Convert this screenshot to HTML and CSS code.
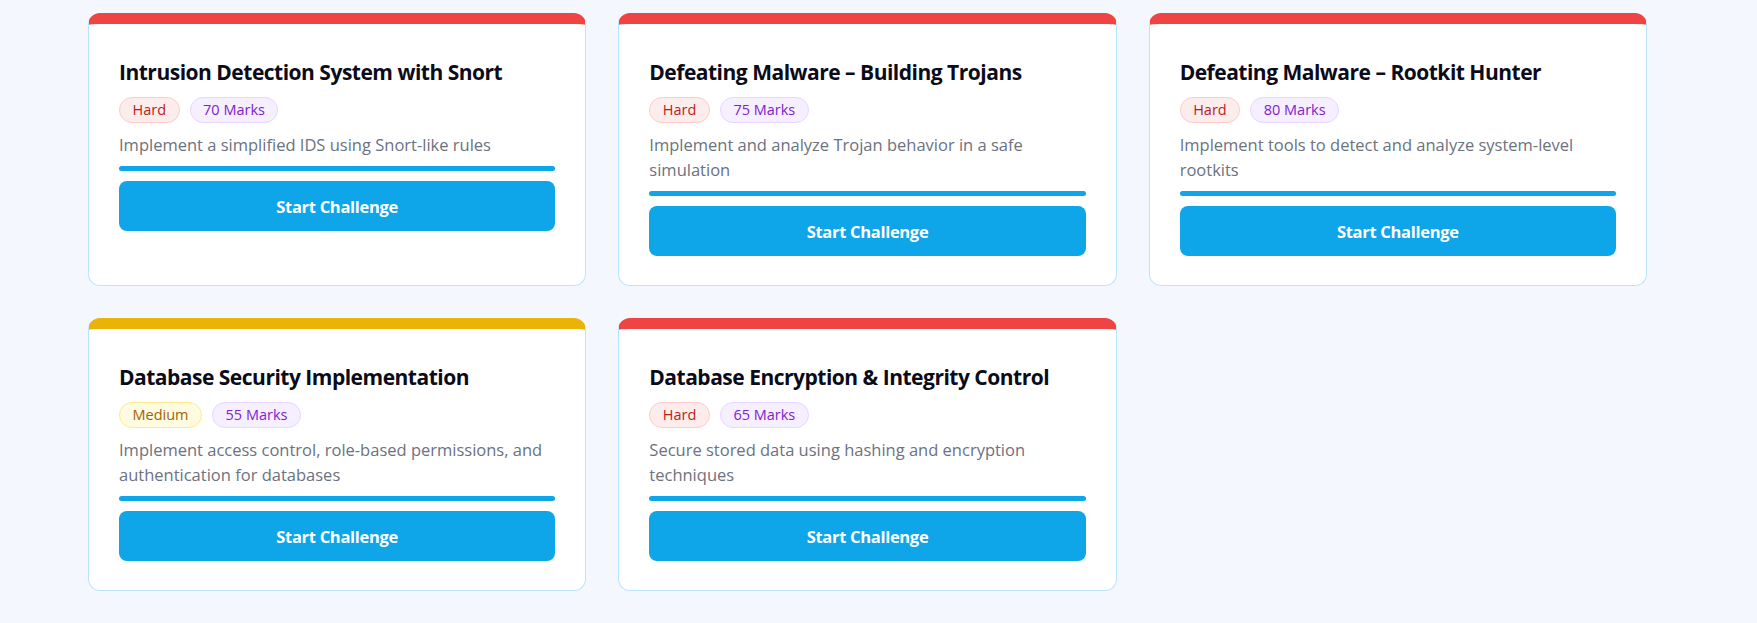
FILE: index.html
```html
<!DOCTYPE html>
<html lang="en">
<head>
<meta charset="utf-8">
<title>Challenges</title>
<link rel="stylesheet" href="styles.css">
</head>
<body>
<main class="page">
  <div class="grid">
    <article class="card card--hard">
      <h3 class="title">Intrusion Detection System with Snort</h3>
      <div class="badges"><span class="badge badge--hard">Hard</span><span class="badge badge--marks">70 Marks</span></div>
      <p class="desc">Implement a simplified IDS using Snort-like rules</p>
      <div class="progress"></div>
      <button class="btn">Start Challenge</button>
    </article>
    <article class="card card--hard">
      <h3 class="title">Defeating Malware – Building Trojans</h3>
      <div class="badges"><span class="badge badge--hard">Hard</span><span class="badge badge--marks">75 Marks</span></div>
      <p class="desc">Implement and analyze Trojan behavior in a safe simulation</p>
      <div class="progress"></div>
      <button class="btn">Start Challenge</button>
    </article>
    <article class="card card--hard">
      <h3 class="title">Defeating Malware – Rootkit Hunter</h3>
      <div class="badges"><span class="badge badge--hard">Hard</span><span class="badge badge--marks">80 Marks</span></div>
      <p class="desc">Implement tools to detect and analyze system-level rootkits</p>
      <div class="progress"></div>
      <button class="btn">Start Challenge</button>
    </article>
    <article class="card card--medium">
      <h3 class="title">Database Security Implementation</h3>
      <div class="badges"><span class="badge badge--medium">Medium</span><span class="badge badge--marks">55 Marks</span></div>
      <p class="desc">Implement access control, role-based permissions, and authentication for databases</p>
      <div class="progress"></div>
      <button class="btn">Start Challenge</button>
    </article>
    <article class="card card--hard">
      <h3 class="title">Database Encryption &amp; Integrity Control</h3>
      <div class="badges"><span class="badge badge--hard">Hard</span><span class="badge badge--marks">65 Marks</span></div>
      <p class="desc">Secure stored data using hashing and encryption techniques</p>
      <div class="progress"></div>
      <button class="btn">Start Challenge</button>
    </article>
  </div>
</main>
</body>
</html>
```

FILE: styles.css
```css
* { box-sizing: border-box; }
html, body { margin: 0; }
body {
  background: #f4f7fd;
  font-family: "Open Sans", "Noto Sans", sans-serif;
  height: 623px;
  overflow: hidden;
}
.page { padding: 13px 0 0 88px; }
.grid {
  width: 1559px;
  display: grid;
  grid-template-columns: repeat(3, 1fr);
  gap: 32px;
}
.card {
  background: #fff;
  border: 1px solid #bae6fd;
  border-top: 11px solid #ef4444;
  border-radius: 12px;
  padding: 34px 30px 29px;
  display: flex;
  flex-direction: column;
}
.card--medium { border-top-color: #eab308; }
.title {
  margin: 0;
  font-size: 21px;
  line-height: 28px;
  font-weight: 700;
  letter-spacing: -0.5px;
  color: #0b0b19;
}
.badges { display: flex; gap: 10px; margin-top: 11px; }
.badge {
  font-size: 14.5px;
  line-height: 20px;
  font-weight: 500;
  padding: 2px 12.5px;
  border: 1px solid;
  border-radius: 999px;
}
.badge--hard { background: #fdecec; border-color: #fecaca; color: #b91c1c; }
.badge--medium { background: #fefbe0; border-color: #fdeb8a; color: #a16207; }
.badge--marks { background: #f6efff; border-color: #e9d5ff; color: #7e22ce; }
.desc {
  margin: 9px 0 0;
  font-size: 16.5px;
  line-height: 25px;
  color: #6b7280;
}
.progress {
  margin-top: 9px;
  height: 5px;
  border-radius: 3px;
  background: #0ea5e9;
}
.btn {
  margin-top: 10px;
  height: 50px;
  border: 0;
  border-radius: 8px;
  background: #0ea5e9;
  color: #fff;
  font-family: inherit;
  font-size: 16.5px;
  font-weight: 700;
  letter-spacing: -0.3px;
}
```
